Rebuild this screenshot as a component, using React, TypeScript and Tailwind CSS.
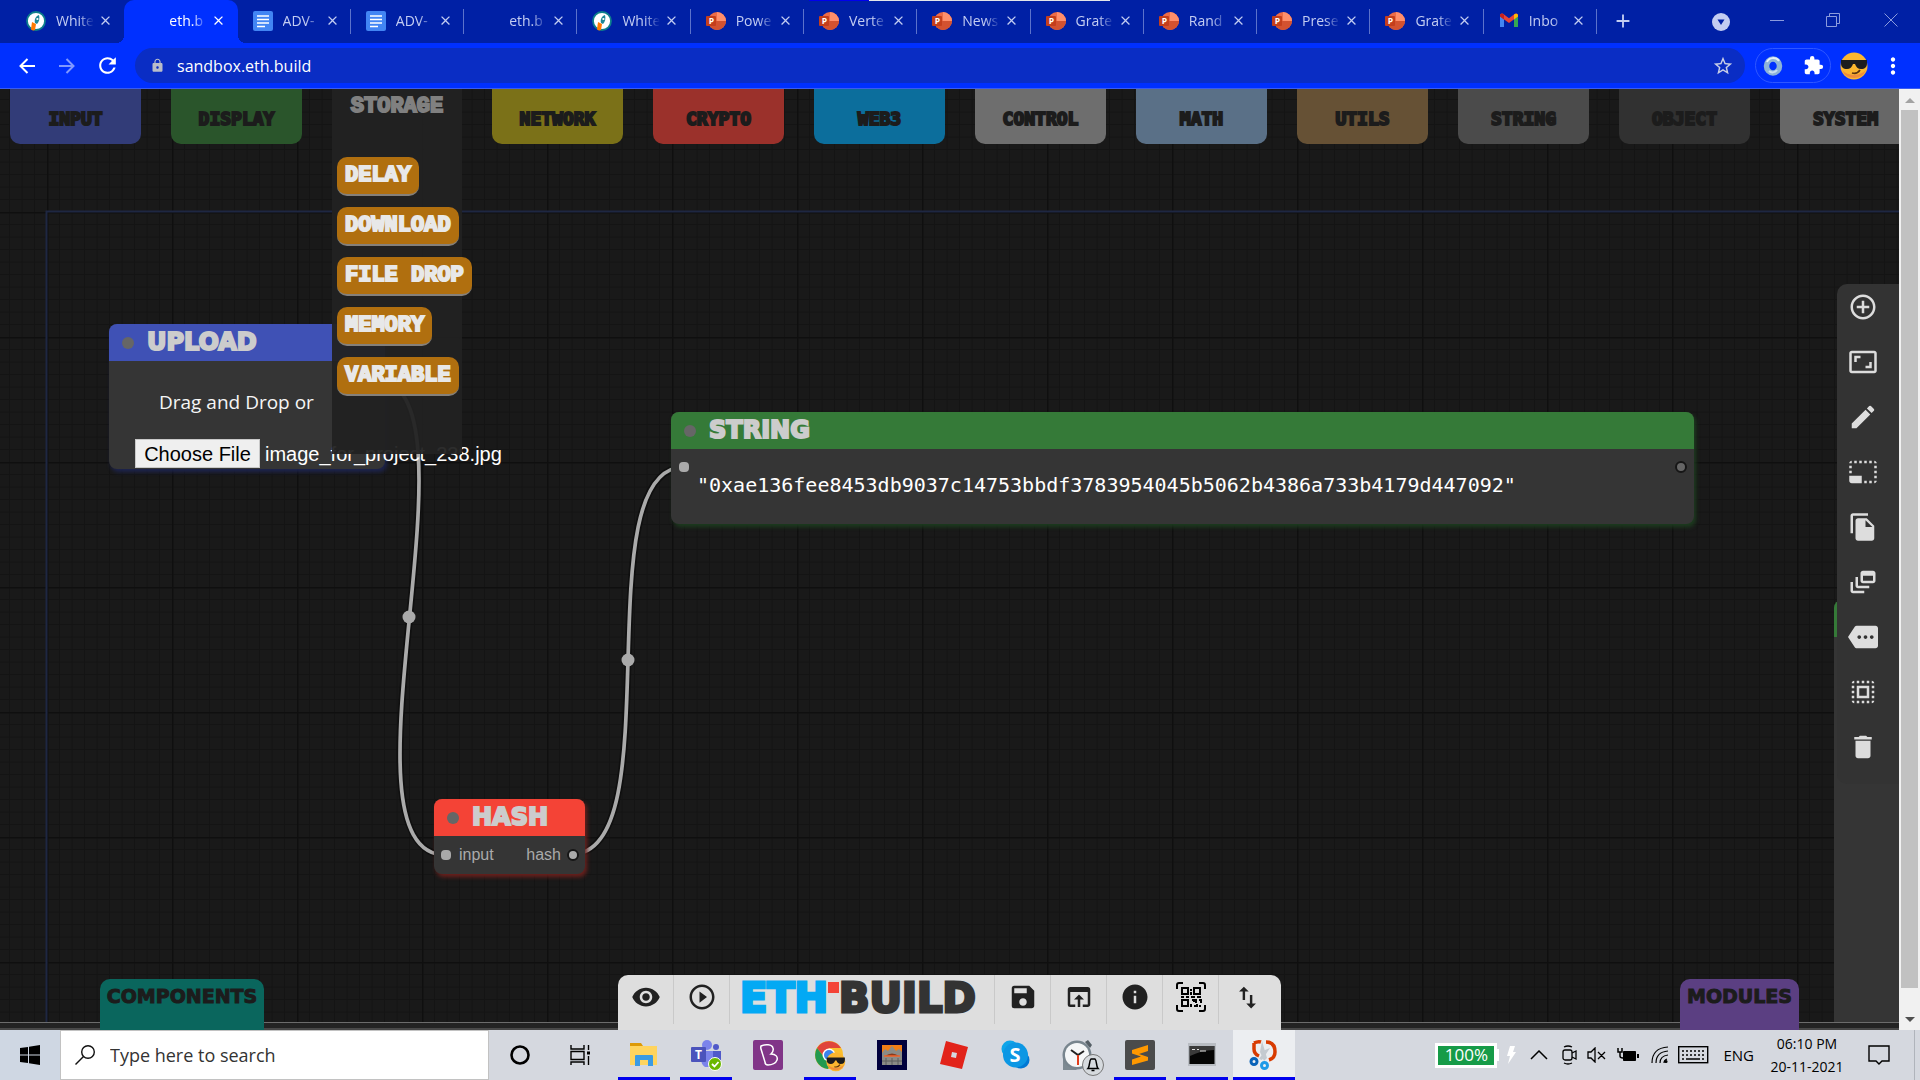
import React from "react";
import {
  MdAddCircleOutline, MdAspectRatio, MdEdit, MdPhotoSizeSelectSmall, MdFileCopy, MdDynamicFeed, MdMore,
  MdSelectAll, MdDelete, MdVisibility, MdPlayCircleOutline, MdSave, MdOpenInBrowser, MdInfo, MdImportExport,
  MdClose, MdAdd, MdLock, MdStarBorder, MdExtension, MdMoreVert, MdRefresh,
} from "react-icons/md";

type Fav = "rocket" | "docs" | "ppt" | "gmail" | "none";

const tabs: { title: string; fav: Fav; active?: boolean; sep?: boolean }[] = [
  { title: "White", fav: "rocket" },
  { title: "eth.b", fav: "none", active: true },
  { title: "ADV-", fav: "docs", sep: true },
  { title: "ADV-", fav: "docs", sep: true },
  { title: "eth.b", fav: "none", sep: true },
  { title: "White", fav: "rocket", sep: true },
  { title: "Powe", fav: "ppt", sep: true },
  { title: "Verte", fav: "ppt", sep: true },
  { title: "News", fav: "ppt", sep: true },
  { title: "Grate", fav: "ppt", sep: true },
  { title: "Rand", fav: "ppt", sep: true },
  { title: "Prese", fav: "ppt", sep: true },
  { title: "Grate", fav: "ppt", sep: true },
  { title: "Inbo", fav: "gmail", sep: true },
];

function Favicon({ kind }: { kind: Fav }) {
  if (kind === "rocket")
    return (
      <svg viewBox="0 0 20 20" className="size-5 shrink-0">
        <circle cx="10" cy="10" r="9" fill="#fff" stroke="#0d7f8c" strokeWidth="1.8" />
        <path d="M9 12c-1-3 .5-7 4-8 1 4 0 7-2 9z" fill="#1d8796" />
        <circle cx="11.4" cy="8" r="1.1" fill="#fff" />
        <path d="M6 11l4 2-1 6c-2 1-4 0-4-1z" fill="#ff7a00" />
      </svg>
    );
  if (kind === "docs")
    return (
      <svg viewBox="0 0 20 20" className="size-5 shrink-0">
        <rect width="20" height="20" rx="2" fill="#4285f4" />
        <path d="M4 5h12M4 8.5h12M4 12h12M4 15.5h8" stroke="#fff" strokeWidth="1.7" />
      </svg>
    );
  if (kind === "ppt")
    return (
      <svg viewBox="0 0 20 20" className="size-5 shrink-0">
        <circle cx="11" cy="10" r="9" fill="#ed6c47" />
        <path d="M11 1a9 9 0 0 1 9 9h-9z" fill="#ff8f6b" />
        <path d="M2 10h18a9 9 0 0 1-18 0z" fill="#d35230" />
        <rect x="0" y="5" width="10" height="10" rx="1" fill="#c43e1c" />
        <text x="2.7" y="13" fontSize="8.5" fontWeight="700" fill="#fff" fontFamily="Open Sans, sans-serif">P</text>
      </svg>
    );
  if (kind === "gmail")
    return (
      <svg viewBox="0 0 20 20" className="size-5 shrink-0">
        <path d="M1 5v11h4V8z" fill="#4285f4" />
        <path d="M15 8v8h4V5z" fill="#34a853" />
        <path d="M1 4.5C1 2.6 3 2 4.400 3L10 7.300V12L1 5.500z" fill="#ea4335" />
        <path d="M10 7.300L15.600 3C17 2 19 2.600 19 4.500V5.500L10 12z" fill="#ea4335" />
        <path d="M15 3.500C17 2 19 2.600 19 4.500V5.500L15 8.400z" fill="#fbbc04" />
        <path d="M5 3.500C3 2 1 2.600 1 4.500V5.500L5 8.400z" fill="#c5221f" />
      </svg>
    );
  return <span className="block size-5 shrink-0" />;
}

function TabStrip() {
  return (
    <header className="relative flex h-[43px] items-stretch bg-[#0020a5] text-[#c3cdf2]">
      <div className="absolute left-[809px] top-0 flex h-px w-[301px]">
        <span className="w-[60px] bg-[#0000ee]" />
        <span className="flex-1 bg-[#e4e6ea]" />
      </div>
      <div className="ml-[11px] flex max-w-[1586px] flex-1">
        {tabs.map((t, i) => (
          <div
            key={i}
            className={
              "relative flex min-w-0 flex-1 items-center pb-0.5 pl-[15px] " +
              (t.active
                ? "rounded-t-[10px] bg-[#0030ff] text-white before:absolute before:-left-2 before:bottom-0 before:size-2 before:bg-[radial-gradient(circle_at_0_0,transparent_8px,#0030ff_8px)] after:absolute after:-right-2 after:bottom-0 after:size-2 after:bg-[radial-gradient(circle_at_100%_0,transparent_8px,#0030ff_8px)]"
                : "")
            }
          >
            <Favicon kind={t.fav} />
            <a href="#" className="ml-[10px] w-[38px] shrink-0 whitespace-nowrap text-sm leading-5 [mask-image:linear-gradient(to_right,black_60%,transparent)]">
              {t.title}
            </a>
            <button aria-label="Close tab" className="ml-1"><MdClose className="size-[15px]" /></button>
            {t.sep && <span className="absolute right-0 top-[9px] h-[25px] w-px bg-[#5c72cb]" />}
          </div>
        ))}
      </div>
      <button aria-label="New tab" className="ml-[15px] pb-0.5"><MdAdd className="size-[22px]" /></button>
      <div className="ml-auto flex items-center">
        <button aria-label="Search tabs" className="mr-[40px]">
          <svg viewBox="0 0 18 18" className="size-[18px]"><circle cx="9" cy="9" r="9" fill="#c3cdf2" /><path d="M5.500 6.500h7L9 12z" fill="#0020a5" /></svg>
        </button>
        <button aria-label="Minimize" className="mr-[42px] -mt-1"><svg width="14" height="14" stroke="#8b9bdd"><path d="M0 7.500h14" /></svg></button>
        <button aria-label="Restore" className="mr-[44px] -mt-1"><svg width="14" height="14" fill="none" stroke="#8b9bdd"><path d="M.5 3.500h10v10H.5zM3.500 3.500v-3h10v10h-3" /></svg></button>
        <button aria-label="Close window" className="mr-[22px] -mt-1"><svg width="14" height="14" stroke="#8b9bdd"><path d="M.5.5l13 13M13.500.5l-13 13" /></svg></button>
      </div>
    </header>
  );
}

function Cool() {
  return (
    <g>
      <circle cx="14" cy="14" r="13.500" fill="#fbb62f" />
      <path d="M2 18a13 13 0 0 0 24 0c-5 6-18 7-24 0z" fill="#ef8d3c" />
      <path d="M1 8h26v3c0 4-2 6-6 6-3 0-5-2-6-5h-2c-1 3-3 5-6 5-4 0-6-2-6-6z" fill="#1c1c1e" />
      <path d="M12 21c3 1 6 0 8-3" stroke="#5b3410" strokeWidth="1.600" fill="none" />
    </g>
  );
}

function Toolbar() {
  return (
    <nav className="flex h-[46px] items-center border-b border-[#3a5cf0] bg-[#0030ff] text-white">
      <button aria-label="Back" className="ml-[19px]"><svg className="size-4" viewBox="0 0 16 16" fill="none" stroke="currentColor" strokeWidth="2"><path d="M16 8H1.500M8.500 1L1.500 8l7 7" /></svg></button>
      <button aria-label="Forward" className="ml-6 opacity-50"><svg className="size-4" viewBox="0 0 16 16" fill="none" stroke="currentColor" strokeWidth="2"><path d="M0 8h14.500M7.500 1l7 7-7 7" /></svg></button>
      <button aria-label="Reload" className="ml-5"><MdRefresh className="size-[25px]" /></button>
      <div className="ml-[15px] flex h-[35px] flex-1 items-center rounded-full bg-[#0a2dc4] pl-[15px] pr-[11px]">
        <MdLock className="size-[15px] text-[#b9bdc9]" />
        <input aria-label="Address" defaultValue="sandbox.eth.build" className="ml-3 min-w-0 flex-1 bg-transparent text-base leading-6 outline-none" />
        <button aria-label="Bookmark"><MdStarBorder className="size-[22px] text-[#c9cfe6]" /></button>
      </div>
      <div className="ml-[10px] flex h-[35px] items-center rounded-full border border-[#2f57ff] pl-[7px] pr-[6px]">
        <svg className="size-5" viewBox="0 0 20 20"><ellipse cx="10" cy="10" rx="6.500" ry="7" fill="none" stroke="#8db4d8" strokeWidth="5.500" /><path d="M4 6c2-5 9-5 12-1" stroke="#e3eef7" strokeWidth="2" fill="none" /><path d="M14 14c-2 3-6 3-8 1" stroke="#c9dff0" strokeWidth="2" fill="none" /></svg>
        <button aria-label="Extensions" className="ml-5"><MdExtension className="size-[21px]" /></button>
      </div>
      <button aria-label="Profile" className="ml-[9px]"><svg className="size-7" viewBox="0 0 28 28"><Cool /></svg></button>
      <button aria-label="Menu" className="ml-3 mr-[14px]"><MdMoreVert className="size-[26px]" /></button>
    </nav>
  );
}

const category = "w-[131px] h-[55px] shrink-0 rounded-b-[10px] pt-2 pb-1 text-center font-['DejaVu_Sans_Mono'] text-lg leading-9 font-bold text-[#1c1c1c] [-webkit-text-stroke:2px_currentColor]";
const left = [["INPUT", "bg-[#323c78]"], ["DISPLAY", "bg-[#2a552b]"]];
const right = [
  ["NETWORK", "bg-[#7b7118]"], ["CRYPTO", "bg-[#9b312b]"], ["WEB3", "bg-[#0c6e9c]"], ["CONTROL", "bg-[#6e6e6e]"],
  ["MATH", "bg-[#5a7087]"], ["UTILS", "bg-[#665135]"], ["STRING", "bg-[#4b4b4b]"], ["OBJECT", "bg-[#313131]"], ["SYSTEM", "bg-[#676767]"],
];
const storage = ["DELAY", "DOWNLOAD", "FILE DROP", "MEMORY", "VARIABLE"];

function Categories() {
  return (
    <div className="absolute inset-x-0 top-0 z-10 flex items-start gap-[30px] overflow-hidden pl-[10px]">
      {left.map(([n, c]) => <button key={n} className={category + " " + c}>{n}</button>)}
      <div className="h-[365px] w-[130px] shrink-0 bg-[#222222]/95 pt-1">
        <h2 className="text-center font-['Liberation_Mono'] text-[22px] leading-7 font-bold text-[#808080] [-webkit-text-stroke:2px_currentColor]">STORAGE</h2>
        <ul className="mt-9 flex flex-col items-start gap-[11px] pl-[5px]">
          {storage.map((s) => (
            <li key={s}>
              <button className="block h-[39px] whitespace-nowrap rounded-[10px] border-b-2 border-[#85807a] bg-[#b06f0f] px-2 font-['Liberation_Mono'] text-[22px] leading-7 font-bold text-[#e8e8e8] [-webkit-text-stroke:2px_currentColor]">{s}</button>
            </li>
          ))}
        </ul>
      </div>
      {right.map(([n, c]) => <button key={n} className={category + " " + c}>{n}</button>)}
    </div>
  );
}

function NodeTitle({ children, color }: { children: string; color: string }) {
  return (
    <h3 className={"flex h-[37px] items-center gap-[13px] rounded-t-lg pl-[13px] font-['DejaVu_Sans'] text-2xl leading-8 font-bold text-[#cccccc] [-webkit-text-stroke:2px_currentColor] " + color}>
      <span className="size-3 rounded-full bg-[#666]" />
      <span className="-mt-0.5">{children}</span>
    </h3>
  );
}

function Graph() {
  const minor = [1, 2, 3, 4, 5, 6, 7, 8, 9].map((n) => n * 12.5);
  return (
    <>
      <svg className="absolute inset-0 size-full" aria-hidden="true">
        <defs>
          <pattern id="grid" x="47" y="-2" width="125" height="125" patternUnits="userSpaceOnUse">
            {minor.map((m) => <path key={m} d={`M${m} 0V125M0 ${m}H125`} stroke="#141414" />)}
            <path d="M.5 0V125M0 .5H125" stroke="#0f0f0f" strokeWidth="2" />
          </pattern>
        </defs>
        <rect width="100%" height="100%" fill="#191919" />
        <rect width="100%" height="100%" fill="url(#grid)" />
        <path d="M46.500 2000V122.500H1900" fill="none" stroke="#1e2742" strokeWidth="2" />
        <g fill="none">
          {["M373 290C493 290 326 766 446 766", "M572 765C673 765 583 378 684 378"].map((d) => (
            <g key={d}><path d={d} stroke="#0b0b0b" strokeWidth="7" opacity=".7" /><path d={d} stroke="#aaaaaa" strokeWidth="3.700" /></g>
          ))}
        </g>
        <circle cx="409" cy="528" r="6.500" fill="#aaa" />
        <circle cx="628" cy="571" r="6.500" fill="#aaa" />
      </svg>

      <section className="absolute left-[109px] top-[235px] h-[145px] w-[276px] rounded-lg bg-[#353535] shadow-[2px_3px_4px_#1d2450]">
        <NodeTitle color="bg-[#3f51b5]">UPLOAD</NodeTitle>
        <p className="mt-[29px] pl-[50px] text-[19px] leading-6 text-[#f5f5f5]">Drag and Drop or</p>
        <label className="mt-[25px] ml-[26px] flex h-[29px] items-center gap-[5px] whitespace-nowrap font-['Liberation_Sans'] text-xl leading-6 text-white">
          <input type="file" className="sr-only" />
          <span className="flex h-[29px] w-[125px] shrink-0 items-center justify-center border border-[#c8c8c8] bg-[#efefef] text-black">Choose File</span>
          <span>image_for_project_238.jpg</span>
        </label>
      </section>

      <section className="absolute left-[671px] top-[323px] h-[112px] w-[1023px] rounded-lg bg-[#353535] shadow-[2px_3px_4px_#1d3d1f]">
        <NodeTitle color="bg-[#357a38]">STRING</NodeTitle>
        <span className="absolute left-2 top-[50px] size-[10px] rounded-[4px] bg-[#aaa]" />
        <span className="absolute right-[7px] top-[49px] size-3 rounded-full border-2 border-[#161616] bg-[#666]" />
        <p className="mt-6 pl-[26px] font-['DejaVu_Sans_Mono'] text-xl leading-6 text-white">"0xae136fee8453db9037c14753bbdf3783954045b5062b4386a733b4179d447092"</p>
      </section>

      <section className="absolute left-[434px] top-[710px] h-[75px] w-[151px] rounded-lg bg-[#353535] shadow-[2px_3px_4px_#6d211d]">
        <NodeTitle color="bg-[#f44336]">HASH</NodeTitle>
        <div className="flex h-[37px] items-center pl-[7px] pr-[6px] font-['Liberation_Sans'] text-base text-[#aaaaaa]">
          <span className="size-[10px] rounded-[4px] bg-[#aaa]" />
          <span className="ml-2">input</span>
          <span className="ml-auto mr-[6px]">hash</span>
          <span className="size-3 rounded-full border-2 border-[#161616] bg-[#aaa]" />
        </div>
      </section>

      <section className="absolute right-0 top-[511px] bottom-0 w-[65px] overflow-hidden rounded-tl-lg bg-[#353535]">
        <div className="h-[37px] bg-[#357a38]" />
      </section>
    </>
  );
}

const tools = [
  ["Add", MdAddCircleOutline], ["Fit", MdAspectRatio], ["Edit", MdEdit], ["Resize", MdPhotoSizeSelectSmall], ["Copy", MdFileCopy],
  ["Layers", MdDynamicFeed], ["Label", MdMore], ["Select all", MdSelectAll], ["Delete", MdDelete],
] as const;

function QrIcon() {
  return (
    <svg className="size-[30px]" viewBox="0 0 30 30" fill="none" stroke="#000" strokeWidth="2">
      <path d="M1 7V3q0-2 2-2h4M23 1h4q2 0 2 2v4M29 23v4q0 2-2 2h-4M7 29H3q-2 0-2-2v-4" />
      <path d="M6 6h6v6H6zM18 6h6v6h-6zM6 18h6v6H6z" />
      <path d="M15 7v2M15 10v3M5 15h3M10 15h3M15 15h4M21 15h4M16 18h2v2M20 17v4M23 18h2v3M15 22v3M18 24h3v-2M24 23v2" />
    </svg>
  );
}

function Dock() {
  const cell = "flex h-[49px] w-14 items-center justify-center border-r border-[#c9c9c9] pb-[5px]";
  return (
    <div className="absolute bottom-0 left-[618px] z-10 flex h-[55px] w-[663px] rounded-t-[10px] bg-[#dedede] text-[#212121]">
      <button aria-label="View" className={cell}><MdVisibility className="size-[30px]" /></button>
      <button aria-label="Run" className={cell}><MdPlayCircleOutline className="size-[30px]" /></button>
      <a href="#" aria-label="ETH.BUILD" className="flex h-[49px] flex-1 items-start border-r border-[#c9c9c9] pl-[10px] font-['DejaVu_Sans'] text-[40px] leading-[46px] font-bold">
        <span className="text-[#03a9f4] [-webkit-text-stroke:3px_currentColor]">ETH</span>
        <span className="mt-[7px] size-[11px] bg-[#f44336]" />
        <span className="text-[#333] [-webkit-text-stroke:3px_currentColor]">BUILD</span>
      </a>
      <button aria-label="Save" className={cell}><MdSave className="size-[30px]" /></button>
      <button aria-label="Open" className={cell}><MdOpenInBrowser className="size-[30px]" /></button>
      <button aria-label="About" className={cell}><MdInfo className="size-[30px]" /></button>
      <button aria-label="Scan" className={cell}><QrIcon /></button>
      <button aria-label="Transfer" className="flex h-[49px] w-[62px] items-center justify-center pb-[5px] pr-[5px]"><MdImportExport className="size-[29px]" /></button>
    </div>
  );
}

function Stage() {
  const drawer = "absolute bottom-0 z-10 h-[51px] rounded-t-[10px] text-center pb-[18px] font-['DejaVu_Sans'] text-[19px] leading-8 font-bold text-[#1c1c1c] [-webkit-text-stroke:1px_currentColor]";
  return (
    <main className="flex min-h-0 flex-1 bg-[#191919]">
      <div className="relative flex min-w-0 flex-1 flex-col overflow-hidden">
        <div className="relative min-h-0 flex-1 overflow-hidden">
          <Graph />
        </div>
        <div className="h-2 border-t border-b-2 border-t-[#6c6c6c] border-b-[#484848] bg-[#232323]" />
        <Categories />
        <aside className="absolute right-0 top-[195px] z-10 flex h-[500px] w-[62px] flex-col items-center gap-[25px] rounded-l-[10px] bg-[#333333] pr-[10px] pt-2 text-[#dddddd]">
          {tools.map(([n, I]) => <button key={n} aria-label={n}><I className="size-[30px]" /></button>)}
        </aside>
        <button className={drawer + " left-[100px] w-[164px] bg-[#0a665d]"}>COMPONENTS</button>
        <button className={drawer + " right-[100px] w-[119px] bg-[#5b3f82]"}>MODULES</button>
        <Dock />
      </div>
      <div className="flex w-[21px] flex-col items-center justify-between bg-[#f1f1f1] px-[2px]">
        <svg className="h-[21px] w-[10px]" viewBox="0 0 10 21"><path d="M0 14h10L5 9z" fill="#a3a3a3" /></svg>
        <div className="w-full flex-1 bg-[#c1c1c1]" />
        <svg className="h-[42px] w-[10px]" viewBox="0 0 10 42"><path d="M0 29h10l-5 5z" fill="#505050" /></svg>
      </div>
    </main>
  );
}

const apps: { name: string; running?: boolean; active?: boolean; art: React.ReactNode }[] = [
  { name: "File Explorer", running: true, art: <><path d="M2 3h11l2 3H2z" fill="#dd9a08" /><path d="M2 6h27v19H2z" fill="#ffd45e" /><path d="M7 26V16q0-1 1-1h16q1 0 1 1v10h-5v-6h-8v6z" fill="#3b9be4" /></> },
  { name: "Teams", running: true, art: <><circle cx="17" cy="5" r="5" fill="#7b83eb" /><circle cx="26" cy="7" r="3" fill="#5059c9" /><path d="M11 11h20v10q-1 6-6 6H15q-4-3-4-8z" fill="#7b83eb" /><path d="M23 11h8v10q-1 3-4 3h-4z" fill="#5059c9" /><rect x="1" y="7" width="15" height="15" rx="1" fill="#4b53bc" /><text x="5" y="19" fontSize="12" fontWeight="700" fill="#fff" fontFamily="Open Sans">T</text><circle cx="25" cy="24" r="6.500" fill="#6bb700" stroke="#fff" /><path d="M22 24l2.500 2.500 4-4.500" stroke="#fff" strokeWidth="1.800" fill="none" /></> },
  { name: "Byju's", art: <><rect x="1" y="0" width="30" height="30" rx="2" fill="#813588" /><path d="M9 6c4-2 11-2 12 2 1 3-1 5-2 6 5 0 7 3 6 6-1 3-5 5-9 5-2 0-3-1-3-3L9 9c-.3-1-.3-2 0-3z" fill="none" stroke="#fff" strokeWidth="1.500" /></> },
  { name: "Chrome", running: true, art: <><circle cx="15" cy="15" r="14" fill="#fbc02d" /><path d="M3 8a14 14 0 0 1 24 0H15l-5 9z" fill="#e0453a" /><path d="M3 8a14 14 0 0 0 11 21l5-9-9-3z" fill="#22994f" /><circle cx="15" cy="15" r="6.500" fill="#fff" /><circle cx="15" cy="15" r="5" fill="#3b82ee" /><g transform="translate(12 12) scale(.7)"><Cool /></g></> },
  { name: "Game", art: <><rect x="1" width="30" height="30" fill="#00003c" /><rect x="6" y="5" width="20" height="20" fill="#8b8b86" /><path d="M6 5h20v7l-3-3-3 2-4-5-4 5-3-2-3 4z" fill="#ef7d16" /><path d="M9 16q7-5 14 0z" fill="#8a3b1c" /><path d="M8 16h16" stroke="#f0652a" strokeWidth="1.500" /><path d="M10 18v7M16 18v7M22 18v7M6 21h20" stroke="#5f5f5c" /></> },
  { name: "Roblox", art: <path fillRule="evenodd" d="M8 1l22 6-6 22-22-5zM14 12l-1 5 5 1 1-5z" fill="#e2231a" /> },
  { name: "Skype", art: <><circle cx="10" cy="9" r="8.500" fill="#0ea5e9" /><circle cx="21" cy="20" r="8.500" fill="#0078d4" /><circle cx="15.500" cy="15" r="12.500" fill="#0c97e4" /><text x="9.500" y="22" fontSize="20" fontWeight="700" fill="#fff" fontFamily="Open Sans">S</text></> },
  { name: "Clock", art: <><path d="M1 15v15h14z" fill="#7e8a92" /><path d="M23 2l3-2 4 5-2 3z" fill="#555f66" /><circle cx="15" cy="15" r="14.500" fill="#78858e" /><circle cx="15" cy="15" r="12" fill="#f5f7f8" /><path d="M9 10l7 5 6-4" stroke="#222" strokeWidth="2" fill="none" /><path d="M16 15v10" stroke="#e23c1a" strokeWidth="2" /><circle cx="31" cy="25" r="10.500" fill="#d6dade" stroke="#777" /><path d="M26 28.500h10c-2-2-1-8-3-9.500h-4c-2 1.500-1 7.500-3 9.500zM29.500 30.500h3" stroke="#000" strokeWidth="1.500" fill="none" /></> },
  { name: "Sublime Text", running: true, art: <><rect x="1" width="30" height="30" rx="2" fill="#4b4b4b" /><path d="M8 10l16-5v6l-9 3 9 3v3.500L8 25v-5.500l9-3-9-3z" fill="#ff9800" /></> },
  { name: "Command Prompt", running: true, art: <><rect x="2" y="3" width="28" height="23" fill="#b8bcc2" /><rect x="3.500" y="6" width="25" height="18" fill="#050505" /><path d="M4 6h24v4q-12 0-24 6z" fill="#3a3a3a" /><path d="M6 9.500h3M11 9.500h2M14 11h6" stroke="#ddd" /></> },
  { name: "Snipping Tool", running: true, active: true, art: <><path d="M6 3v6q0 5 5 7M6 3q4-2 7-1M18 2q9 0 9 10 0 6-6 8" fill="none" stroke="#d83b01" strokeWidth="3.500" /><path d="M14 1l5 17-3 3-4-9zM22 8l-8 12-3-1 6-9z" fill="#c4cad0" /><circle cx="6" cy="21.500" r="3" fill="none" stroke="#0a63b8" strokeWidth="3" /><circle cx="16.500" cy="25.500" r="3" fill="none" stroke="#1e9ae8" strokeWidth="3" /></> },
];

function Tray() {
  return (
    <div className="ml-auto flex items-center text-black">
      <div className="flex h-[25px] w-[62px] items-center justify-center border-3 border-white bg-[#169b48] text-[17px] leading-5 text-white">100%</div>
      <span className="h-3 w-[2px] bg-white" />
      <svg className="ml-2 h-[18px] w-[9px]" viewBox="0 0 9 18"><path d="M3 0h5L6 6h3L1 18l2-8H0z" fill="#fff" /></svg>
      <button aria-label="Show hidden icons" className="ml-[14px]"><svg width="18" height="10" fill="none" stroke="#000" strokeWidth="1.500"><path d="M1 9l8-8 8 8" /></svg></button>
      <svg className="ml-[13px]" width="18" height="20" fill="none" stroke="#000" strokeWidth="1.300"><rect x="2" y="5" width="9" height="10" rx="2" /><path d="M11 8l4-2v8l-4-2M3 2q4-2 8 0M3 18q4 2 8 0" /></svg>
      <svg className="ml-2" width="20" height="16" fill="none" stroke="#000" strokeWidth="1.300"><path d="M1 5h3l4-4v14l-4-4H1zM11 5l7 7M18 5l-7 7" /></svg>
      <svg className="ml-[10px]" width="22" height="16"><path d="M6.500 4.500h12v9h-12z" stroke="#000" /><path d="M20 7h2v4h-2z" /><path d="M1 1v4h4V1M3 5v4q0 2 3 2" fill="none" stroke="#000" strokeWidth="1.500" /></svg>
      <svg className="ml-3" width="18" height="18" fill="none" stroke="#000" strokeWidth="1.200"><path d="M1 17Q1 2 17 1M5 17Q5 6 17 5M9 17q0-7 8-8" /><path d="M13 17q0-3 3-4" /><circle cx="15" cy="15.500" r="1" fill="#000" /></svg>
      <svg className="ml-[9px]" width="31" height="18" fill="none" stroke="#000"><rect x=".7" y=".7" width="29" height="16" strokeWidth="1.400" /><path d="M4 5h23M4 9h23" strokeDasharray="2 2" strokeWidth="1.500" /><path d="M4 13h2M8 13h14M24 13h2" strokeWidth="1.500" /></svg>
      <span className="ml-[14px] text-[15px]">ENG</span>
      <div className="ml-[14px] w-[78px] whitespace-nowrap text-center text-sm leading-[23px]">
        <div>06:10 PM</div><div>20-11-2021</div>
      </div>
      <button aria-label="Notifications" className="ml-[22px]"><svg width="22" height="22" fill="none" stroke="#000" strokeWidth="1.400"><path d="M1 2h20v15h-7l-3 3-3-3H1z" /></svg></button>
      <span className="ml-6 mr-[5px] h-[50px] w-px bg-[#b0b4bb]" />
    </div>
  );
}

function Taskbar() {
  return (
    <footer className="flex h-[50px] items-center bg-[#d5d8df]">
      <button aria-label="Start" className="flex h-full w-[60px] items-center justify-center bg-[#cfd7e3]"><svg className="size-5" viewBox="0 0 20 20"><path d="M0 3l8-1v7.500H0zM9 1.800L20 0v9.500H9zM0 10.500h8V18l-8-1zM9 10.500h11V20L9 18.200z" /></svg></button>
      <label className="flex h-full w-[429px] items-center border border-[#c2c2c2] bg-white pl-[14px]">
        <svg className="size-5" viewBox="0 0 20 20" fill="none" stroke="#111" strokeWidth="1.400"><circle cx="13" cy="7" r="6.300" /><path d="M8.500 11.500L.5 19.500" /></svg>
        <input placeholder="Type here to search" aria-label="Search" className="ml-[15px] flex-1 bg-transparent text-lg leading-6 outline-none placeholder:text-[#333]" />
      </label>
      <button aria-label="Cortana" className="flex w-[62px] justify-center"><svg className="size-5" viewBox="0 0 20 20"><circle cx="10" cy="10" r="8.500" fill="none" stroke="#000" strokeWidth="2.600" /></svg></button>
      <button aria-label="Task view" className="flex w-[62px] justify-center pr-1"><svg width="20" height="20" fill="none" stroke="#000" strokeWidth="1.400"><path d="M1 0v4h13V0M1 6.500h13v8H1zM1 20v-3h13v3M18.500 0v5M18.500 11v9" /><path d="M17 8h3" strokeWidth="3" /></svg></button>
      {apps.map((a) => (
        <button key={a.name} aria-label={a.name} className={"relative flex h-full w-[62px] items-center justify-center " + (a.active ? "bg-[#eceef1]" : "")}>
          <svg className="size-8 overflow-visible" viewBox="0 -1 32 32">{a.art}</svg>
          {a.running && <span className={"absolute bottom-0 h-[3px] bg-[#0000ee] " + (a.active ? "inset-x-0" : "inset-x-[5px]")} />}
        </button>
      ))}
      <Tray />
    </footer>
  );
}

export default function App() {
  return (
    <div className="flex h-screen flex-col overflow-hidden font-['Open_Sans',sans-serif]">
      <TabStrip />
      <Toolbar />
      <Stage />
      <Taskbar />
    </div>
  );
}
